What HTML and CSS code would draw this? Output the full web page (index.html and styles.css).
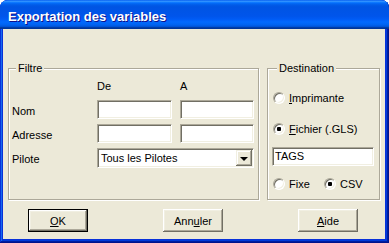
FILE: index.html
```html
<!DOCTYPE html>
<html lang="fr">
<head>
    <meta charset="UTF-8">
    <title>Exportation des variables</title>
    <link rel="stylesheet" href="styles.css">
</head>
<body>
    <div class="window">
        <div class="titlebar">
            <span class="title">Exportation des variables</span>
        </div>
        <div class="client">
            <div class="groups">
                <!-- filtre -->
                <fieldset class="group filtre">
                    <legend>Filtre</legend>
                    <div class="filter-grid">
                        <span></span>
                        <span class="head">De</span>
                        <span class="head">A</span>

                        <span class="lbl">Nom</span>
                        <div class="field"></div>
                        <div class="field"></div>

                        <span class="lbl">Adresse</span>
                        <div class="field"></div>
                        <div class="field"></div>

                        <span class="lbl">Pilote</span>
                        <div class="field combo">
                            <span class="combo-text">Tous les Pilotes</span>
                            <span class="drop"><i class="arrow"></i></span>
                        </div>
                    </div>
                </fieldset>

                <!-- destination -->
                <fieldset class="group dest">
                    <legend>Destination</legend>
                    <div class="radio-row first">
                        <span class="radio"></span><span><u>I</u>mprimante</span>
                    </div>
                    <div class="radio-row second">
                        <span class="radio on"></span><span><u>F</u>ichier (.GLS)</span>
                    </div>
                    <div class="field tags">TAGS</div>
                    <div class="radio-line">
                        <div class="radio-row fixe">
                            <span class="radio"></span><span>Fixe</span>
                        </div>
                        <div class="radio-row">
                            <span class="radio on"></span><span>CSV</span>
                        </div>
                    </div>
                </fieldset>
            </div>

            <div class="buttons">
                <div class="btn default"><span><u>O</u>K</span></div>
                <div class="btn">Ann<u>u</u>ler</div>
                <div class="btn"><u>A</u>ide</div>
            </div>
        </div>
    </div>
</body>
</html>
```

FILE: styles.css
```css
body{
    margin: 0;
    background: #fff;
    font-family: "Liberation Sans", Arial, sans-serif;
    font-size: 11px;
    color: #000;
}
/* cadre de la fenetre */
.window{
    width: 389px;
    height: 243px;
    box-sizing: border-box;
    padding: 0 4px 4px 3px;
    background: #0831d9;
    border-radius: 8px 8px 0 0;
    display: flex;
    flex-direction: column;
    box-shadow: inset -1px -1px #00138c, inset 1px 1px #0831d9,
                inset -2px -2px #001ea0, inset 2px 2px #166aee,
                inset -3px -3px #003bda;
}
.titlebar{
    height: 29px;
    margin: 0 -4px 0 -3px;
    padding: 3px 0 0 8px;
    box-sizing: border-box;
    display: flex;
    align-items: center;
    border-radius: 8px 8px 0 0;
    background: linear-gradient(to bottom, #0058ee 0%, #3593ff 4%, #288eff 6%, #127dff 8%,
        #036ffc 10%, #0262ee 14%, #0057e5 20%, #0054e3 24%, #0055eb 56%, #005bf5 66%,
        #026afe 76%, #0062ef 86%, #0052d6 92%, #0040ab 94%, #003092 100%);
}
.title{
    color: #fff;
    font-weight: bold;
    font-size: 13px;
    text-shadow: 1px 1px #0f1089;
}
.client{
    flex: 1;
    background: #ece9d8;
    padding-top: 33px;
}
/* groupes */
.groups{
    display: flex;
    gap: 8px;
    height: 138px;
    margin-left: 5px;
}
.group{
    margin: 0;
    padding: 0;
    min-width: 0;
    box-sizing: border-box;
    border: 1px solid #aca899;
    box-shadow: inset 1px 1px #fff, 1px 1px #fff;
}
.group legend{
    padding: 0 2px;
    margin-left: 4px;
    line-height: 12px;
    background: #ece9d8;
}
.filtre{
    width: 251px;
    padding: 6px 0 0 3px;
}
.dest{
    width: 113px;
    padding: 17px 0 0 5px;
}
.filter-grid{
    display: grid;
    grid-template-columns: 77px 75px 74px;
    grid-template-rows: 15px 19px 19px 20px;
    column-gap: 8px;
    row-gap: 5px;
}
.head{
    line-height: 13px;
}
.lbl{
    display: flex;
    align-items: center;
    padding-top: 2px;
}
/* champs en creux */
.field{
    box-sizing: border-box;
    height: 19px;
    background: #fff;
    border: 1px solid;
    border-color: #aca899 #fff #fff #aca899;
    box-shadow: inset 1px 1px #716f64, inset -1px -1px #f1efe2;
}
.combo{
    grid-column: 2 / 4;
    height: 20px;
    display: flex;
    align-items: center;
    padding: 1px 1px 1px 3px;
}
.combo-text{
    flex: 1;
}
.drop{
    width: 16px;
    height: 16px;
    box-sizing: border-box;
    background: #ece9d8;
    display: flex;
    align-items: center;
    justify-content: center;
    box-shadow: inset -1px -1px #716f64, inset 1px 1px #f1efe2,
                inset -2px -2px #aca899, inset 2px 2px #fff;
}
.arrow{
    width: 0;
    height: 0;
    border-left: 4px solid transparent;
    border-right: 4px solid transparent;
    border-top: 4px solid #000;
    margin-top: 1px;
}
/* boutons radio */
.radio-row{
    display: flex;
    align-items: center;
    gap: 4px;
    height: 13px;
}
.second{
    margin-top: 18px;
}
.radio{
    width: 12px;
    height: 12px;
    box-sizing: border-box;
    border-radius: 50%;
    border: 1px solid;
    border-color: #aca899 #fff #fff #aca899;
    background: #fff;
    box-shadow: inset 1px 1px #716f64, inset -1px -1px #f1efe2;
}
.radio.on{
    background: radial-gradient(circle, #000 0 2px, #fff 2.5px);
}
.tags{
    width: 102px;
    margin: 12px 0 0 -1px;
    padding-left: 2px;
    line-height: 17px;
}
.radio-line{
    display: flex;
    margin-top: 11px;
}
.fixe{
    width: 51px;
}
/* boutons */
.buttons{
    display: flex;
    gap: 75px;
    margin: 9px 0 0 25px;
}
.btn{
    width: 60px;
    height: 23px;
    box-sizing: border-box;
    display: flex;
    align-items: center;
    justify-content: center;
    background: #ece9d8;
    box-shadow: inset -1px -1px #716f64, inset 1px 1px #fff,
                inset -2px -2px #aca899, inset 2px 2px #f1efe2;
}
.btn.default{
    border: 1px solid #000;
}
```
